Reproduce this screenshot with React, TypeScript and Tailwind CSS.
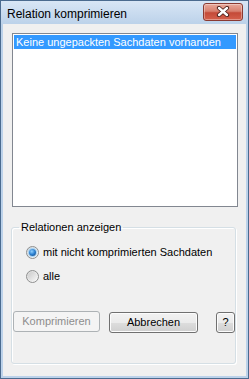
import React from 'react';

const ui = { fontFamily: '"Liberation Sans", Arial, sans-serif' };

function Radio({ checked, label }: { checked?: boolean; label: string }) {
  return (
    <div className="flex items-center gap-[4px] h-[13px]">
      <div className="w-[13px] h-[13px] rounded-full border border-[#8e8f8f] bg-gradient-to-br from-[#d8d8d8] to-[#fbfbfb] flex items-center justify-center">
        {checked ? (
          <div className="w-[7px] h-[7px] rounded-full bg-[radial-gradient(circle_at_40%_35%,#8fd0ff_0%,#2a7fd0_50%,#0f3f75_100%)] shadow-[0_0_1px_1px_#9ed0f5]" />
        ) : (
          <div className="w-[9px] h-[9px] rounded-full bg-gradient-to-br from-[#cbcbcb] to-[#f6f6f6]" />
        )}
      </div>
      <span className="text-[11px] leading-[13px] text-black">{label}</span>
    </div>
  );
}

function Btn({ children, w, disabled }: { children: React.ReactNode; w: string; disabled?: boolean }) {
  return (
    <button
      className={`${w} h-[21px] rounded-[3px] border text-[11px] leading-none ${
        disabled
          ? 'border-[#adb2b5] bg-[#f4f4f4] text-[#8d8d8d]'
          : 'border-[#707070] text-black bg-[linear-gradient(#f2f2f2_0%,#ebebeb_50%,#dddddd_51%,#cfcfcf_100%)] shadow-[inset_0_0_0_1px_#fcfcfc]'
      }`}
    >
      {children}
    </button>
  );
}

export default function App() {
  return (
    <div style={ui} className="w-[249px] h-[379px] border border-[#4b6b8f] bg-[#bcd2ea] flex flex-col">
      {/* title bar */}
      <div className="h-[23px] flex items-center justify-between pl-[6px] pr-[5px] bg-gradient-to-b from-[#d8e6f5] to-[#bcd2ea]">
        <span className="text-[12px] leading-none text-black mt-[2px]">Relation komprimieren</span>
        <div className="w-[40px] h-[18px] mt-[-2px] rounded-[3px] border border-[#8a3a32] bg-[linear-gradient(#e9a99b_0%,#d8806f_45%,#c44a38_55%,#d5604c_100%)] flex items-center justify-center shadow-[inset_0_0_0_1px_rgba(255,255,255,0.35)]">
          <svg width="14" height="11" viewBox="0 0 14 11">
            <path d="M3 2 L11 9 M11 2 L3 9" stroke="#4a1f1a" strokeWidth="4.2" strokeLinecap="round" />
            <path d="M3 2 L11 9 M11 2 L3 9" stroke="#ffffff" strokeWidth="2.4" strokeLinecap="round" />
          </svg>
        </div>
      </div>

      {/* client */}
      <div className="flex-1 mx-[2px] mb-[2px] bg-[#f0f0f0] flex flex-col px-[9px] pt-[9px]">
        {/* list box */}
        <div className="h-[174px] w-[226px] bg-white border border-[#828790] pt-[1px] px-[1px]">
          <div className="h-[14px] bg-[#3399ff] text-white text-[11px] leading-[14px] pl-[2px]">
            Keine ungepackten Sachdaten vorhanden
          </div>
        </div>

        {/* group box */}
        <fieldset className="mt-[14px] ml-[-1px] w-[225px] h-[143px] border border-[#d5dfe5] rounded-[3px] shadow-[inset_1px_1px_0_#ffffff,1px_1px_0_#ffffff]">
          <legend className="ml-[7px] px-[2px] text-[11px] leading-[13px] text-black">Relationen anzeigen</legend>
          <div className="flex flex-col">
            <div className="flex flex-col gap-[11px] pl-[14px] pt-[12px]">
              <Radio checked label="mit nicht komprimierten Sachdaten" />
              <Radio label="alle" />
            </div>
            <div className="flex items-center pl-[1px] mt-[26px]">
              <Btn w="w-[87px]" disabled>Komprimieren</Btn>
              <div className="ml-[9px]">
                <Btn w="w-[89px]">Abbrechen</Btn>
              </div>
              <div className="ml-[18px]">
                <Btn w="w-[19px]">?</Btn>
              </div>
            </div>
          </div>
        </fieldset>
      </div>
    </div>
  );
}
